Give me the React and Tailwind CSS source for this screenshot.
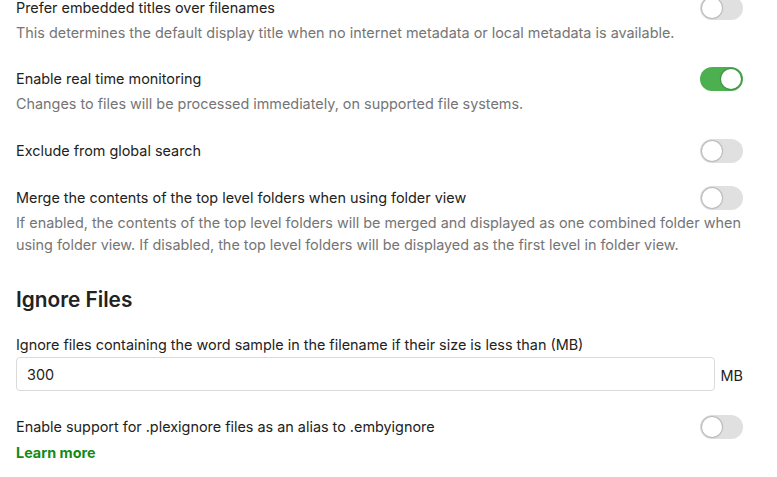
import React from 'react';

function Toggle({ on = false }) {
  return (
    <div
      className={`flex h-6 w-[43px] shrink-0 items-center rounded-full p-[2px] ${
        on ? 'justify-end bg-[#4caf50]' : 'justify-start bg-[#e0e0e0]'
      }`}
    >
      <div className="h-5 w-5 rounded-full bg-white shadow-[0_0_1px_1px_rgba(0,0,0,0.18)]" />
    </div>
  );
}

function ToggleSetting({ label, description, on, children }) {
  return (
    <div className="flex flex-col">
      <div className="flex h-6 items-center justify-between gap-4">
        <span className="text-[14.4px] leading-5 text-[#222]">{label}</span>
        <Toggle on={on} />
      </div>
      {description && (
        <p className="mt-[2px] text-[14.4px] leading-[22px] text-[#757575]">{description}</p>
      )}
      {children}
    </div>
  );
}

export default function App() {
  return (
    <div className="h-[477px] overflow-hidden bg-white font-['Inter','Noto_Sans',sans-serif]">
      <div className="-mt-1 flex w-[743px] flex-col pl-4">
        <ToggleSetting
          label="Prefer embedded titles over filenames"
          description="This determines the default display title when no internet metadata or local metadata is available."
        />
        <div className="h-[23px]" />
        <ToggleSetting
          label="Enable real time monitoring"
          description="Changes to files will be processed immediately, on supported file systems."
          on
        />
        <div className="h-6" />
        <ToggleSetting label="Exclude from global search" />
        <div className="h-[23px]" />
        <ToggleSetting
          label="Merge the contents of the top level folders when using folder view"
          description="If enabled, the contents of the top level folders will be merged and displayed as one combined folder when using folder view. If disabled, the top level folders will be displayed as the first level in folder view."
        />

        <h2 className="mt-[30px] text-[20.8px] font-semibold leading-7 text-[#222]">Ignore Files</h2>

        <label className="mt-[21px] text-[14.4px] leading-5 text-[#222]">
          Ignore files containing the word sample in the filename if their size is less than (MB)
        </label>
        <div className="mt-[2px] flex items-end gap-[6px]">
          <input
            readOnly
            value="300"
            className="h-[34px] flex-1 rounded-[4px] border border-[#dadada] bg-white px-[10px] text-[14.4px] text-[#222] outline-none"
          />
          <span className="pb-[4px] text-[14.4px] text-[#222]">MB</span>
        </div>

        <div className="h-6" />
        <ToggleSetting label="Enable support for .plexignore files as an alias to .embyignore">
          <a className="mt-1 text-[14.4px] font-bold leading-5 text-[#148a14]">Learn more</a>
        </ToggleSetting>
      </div>
    </div>
  );
}
